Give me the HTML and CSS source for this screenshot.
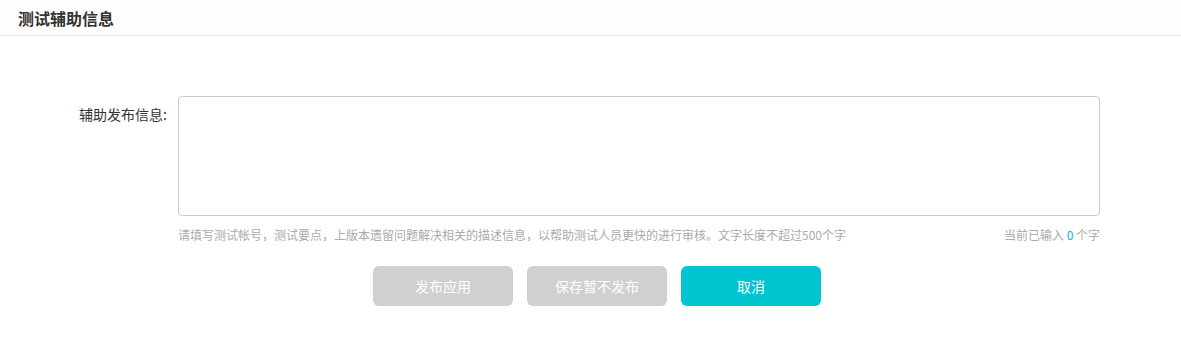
FILE: index.html
```html
<!DOCTYPE html>
<html lang="zh">
<head>
<meta charset="utf-8">
<link rel="stylesheet" href="styles.css">
</head>
<body>
<div class="header"><h1 class="title">测试辅助信息</h1></div>
<div class="form">
  <div class="row">
    <label class="label">辅助发布信息:</label>
    <div class="field">
      <textarea class="textarea"></textarea>
      <div class="hints">
        <span class="hint">请填写测试帐号，测试要点，上版本遗留问题解决相关的描述信息，以帮助测试人员更快的进行审核。文字长度不超过500个字</span>
        <span class="count">当前已输入 <em class="num">0</em> 个字</span>
      </div>
    </div>
  </div>
  <div class="actions">
    <button class="btn btn-disabled">发布应用</button>
    <button class="btn btn-disabled">保存暂不发布</button>
    <button class="btn btn-primary">取消</button>
  </div>
</div>
</body>
</html>
```
FILE: styles.css
```css
* { box-sizing: border-box; }
html, body { margin: 0; padding: 0; background: #fff; }
body { font-family: "Microsoft YaHei", "Noto Sans CJK SC", sans-serif; color: #333; }
.header {
  height: 36px;
  border-bottom: 1px solid #e8e8e8;
  background: #fdfdfd;
  display: flex;
  align-items: center;
  padding-left: 18px;
}
.title { margin: 0; font-size: 16px; font-weight: bold; color: #333; line-height: 20px; }
.form { padding-top: 60px; }
.row { display: flex; align-items: flex-start; }
.label {
  width: 167px;
  text-align: right;
  font-size: 14px;
  color: #333;
  line-height: 18px;
  padding-top: 9px;
  margin-right: 11px;
}
.field { width: 922px; }
.textarea {
  display: block;
  width: 922px;
  height: 120px;
  border: 1px solid #ccc;
  border-radius: 4px;
  resize: none;
  margin: 0;
  outline: none;
}
.hints {
  display: flex;
  justify-content: space-between;
  margin-top: 11px;
  font-size: 12px;
  line-height: 16px;
  color: #aaa;
}
.num { font-style: normal; color: #00c1cf; }
.actions {
  display: flex;
  gap: 14px;
  padding-left: 373px;
  margin-top: 23px;
}
.btn {
  width: 140px;
  height: 40px;
  border: none;
  border-radius: 6px;
  font-family: inherit;
  font-size: 14px;
  color: #fff;
  padding: 0;
}
.btn-disabled { background: #d0d0d0; }
.btn-primary { background: #00c5d0; }
```
